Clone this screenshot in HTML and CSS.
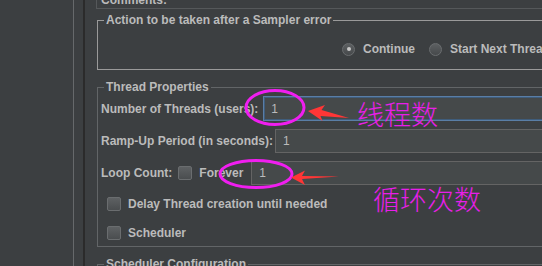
FILE: index.html
```html
<!DOCTYPE html>
<html lang="en">
<head>
  <meta charset="UTF-8" />
  <title>Thread Group</title>
  <link rel="stylesheet" href="styles.css">
</head>
<body>
  <div class="app">
    <div class="sidebar"></div>
    <div class="gutter"></div>
    <div class="main">
      <div class="comments"><span>Comments:</span></div>

      <fieldset class="group light">
        <legend>Action to be taken after a Sampler error</legend>
        <div class="radios">
          <label class="radio"><span class="dot on"></span>Continue</label>
          <label class="radio"><span class="dot"></span>Start Next Thread Loop</label>
          <label class="radio"><span class="dot"></span>Stop Thread</label>
        </div>
      </fieldset>

      <fieldset class="group props">
        <legend>Thread Properties</legend>
        <div class="row r1">
          <span>Number of Threads (users):</span>
          <div class="field focus">1</div>
        </div>
        <div class="row r2">
          <span>Ramp-Up Period (in seconds):</span>
          <div class="field">1</div>
        </div>
        <div class="row r3">
          <span>Loop Count:</span>
          <span class="box"></span>
          <span>Forever</span>
          <div class="field">1</div>
        </div>
        <div class="row check">
          <span class="box"></span>
          <span>Delay Thread creation until needed</span>
        </div>
        <div class="row check last">
          <span class="box"></span>
          <span>Scheduler</span>
        </div>
      </fieldset>

      <fieldset class="group sched">
        <legend>Scheduler Configuration</legend>
      </fieldset>
    </div>
  </div>

  <!-- annotations drawn over the screenshot -->
  <svg class="marks" width="542" height="266" viewBox="0 0 542 266">
    <ellipse cx="275" cy="107.5" rx="29" ry="17" fill="none" stroke="#f01ef0" stroke-width="3"/>
    <ellipse cx="256" cy="174" rx="36" ry="13.5" fill="none" stroke="#f01ef0" stroke-width="3"/>
    <polygon points="308,111 325,105 321.5,110 349,118 320.5,116 322.5,121" fill="#ff3636"/>
    <polygon points="291,177.5 305,170.5 302,176 339,176.5 302,179 305,185" fill="#ff3636"/>
  </svg>
  <div class="note n1">线程数</div>
  <div class="note n2">循环次数</div>
</body>
</html>
```

FILE: styles.css
```css
* {
  box-sizing: border-box;
}
body {
  margin: 0;
  height: 266px;
  overflow: hidden;
  position: relative;
  background: #3c3f41;
  color: #bbbbbb;
  font: bold 12px "Liberation Sans", Arial, sans-serif;
}
.app {
  display: flex;
  height: 266px;
}
.sidebar {
  width: 74px;
  flex: none;
  border-right: 1px solid #66696b;
}
.gutter {
  width: 11px;
  flex: none;
  border-right: 2px solid #2b2b2b;
}
.main {
  flex: none;
  width: 620px;
  padding-left: 11px;
}
.comments {
  height: 9px;
  overflow: hidden;
  border-left: 1px solid #55585a;
  border-bottom: 1px solid #55585a;
  padding-left: 4px;
}
.comments span {
  display: block;
  line-height: 14px;
  margin-top: -7px;
}
.group {
  margin: 4px 0 0 1px;
  padding: 0 0 0 3px;
  min-width: 0;
  border: 1px solid #626567;
}
.group legend {
  margin-left: 3px;
  padding: 0 2px;
  line-height: 14px;
}
.group.light {
  border-color: #9a9a9a;
}
.radios {
  display: flex;
  align-items: center;
  height: 22px;
  margin: 11px 0 9px;
  padding-left: 241px;
  white-space: nowrap;
}
.radio {
  display: flex;
  align-items: center;
  margin-right: 14px;
}
.dot {
  width: 13px;
  height: 13px;
  margin-right: 8px;
  border-radius: 50%;
  border: 1px solid #6a6d6f;
  background: linear-gradient(#5c5f61, #46494b);
  display: flex;
  align-items: center;
  justify-content: center;
}
.dot.on::after {
  content: "";
  width: 4px;
  height: 4px;
  border-radius: 50%;
  background: #c8c8c8;
}
.props {
  margin-top: 10px;
}
.row {
  display: flex;
  align-items: center;
  white-space: nowrap;
}
.r1 {
  height: 25px;
  margin-top: 2px;
}
.r2 {
  height: 24px;
  margin-top: 8px;
}
.r3 {
  height: 24px;
  margin-top: 8px;
}
.check {
  height: 20px;
  margin-top: 9px;
  padding-left: 6px;
}
.check.last {
  margin-top: 9px;
  margin-bottom: 3px;
}
.field {
  flex: 1;
  align-self: stretch;
  display: flex;
  align-items: center;
  margin-left: 5px;
  padding-left: 7px;
  background: #45494a;
  border: 1px solid #646464;
  font-weight: normal;
}
.field.focus {
  border-color: #5a7ea6;
  box-shadow: inset 0 0 0 1px #3f5d7c;
}
.r2 .field {
  margin-left: 2px;
}
.r3 .field {
  margin-left: 8px;
}
.box {
  width: 14px;
  height: 14px;
  flex: none;
  margin-right: 7px;
  border: 1px solid #6a6d6f;
  border-radius: 2px;
  background: linear-gradient(#5e6163, #4a4d4f);
}
.r3 .box {
  margin-left: 6px;
}
.sched {
  margin-top: 10px;
  height: 30px;
}
.marks {
  position: absolute;
  left: 0;
  top: 0;
}
.note {
  position: absolute;
  color: #e81ee8;
  font: 300 27px "Noto Sans CJK SC", sans-serif;
  line-height: 30px;
  white-space: nowrap;
}
.n1 {
  left: 357px;
  top: 99px;
}
.n2 {
  left: 373px;
  top: 184px;
}
```
